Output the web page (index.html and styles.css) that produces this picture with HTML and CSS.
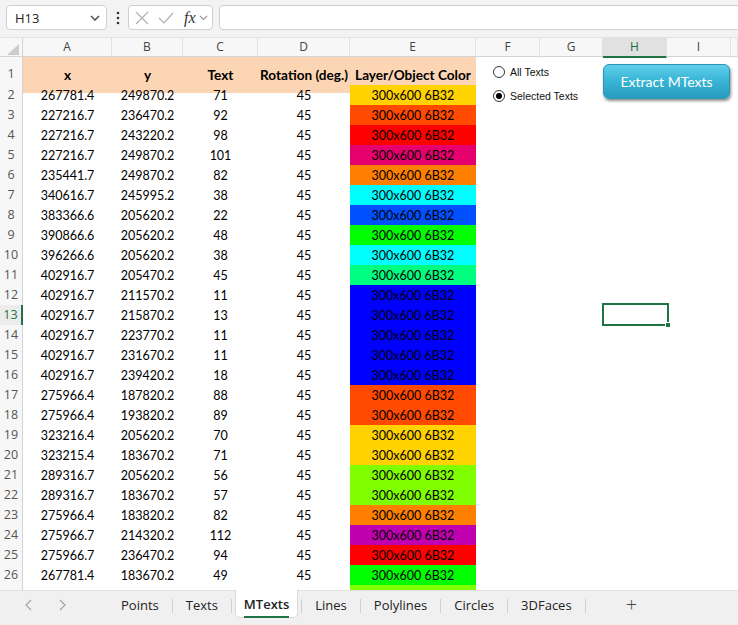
FILE: index.html
```html
<!DOCTYPE html>
<html>
<head>
<meta charset="utf-8">
<link rel="stylesheet" href="styles.css">
</head>
<body>
<div class="app">
  <div class="toolbar">
    <div class="namebox"><span>H13</span>
      <svg class="chev" width="10" height="6" viewBox="0 0 10 6"><path d="M1 1 L5 5 L9 1" fill="none" stroke="#444" stroke-width="1.3"/></svg>
    </div>
    <svg class="dots" width="4" height="14" viewBox="0 0 4 14"><circle cx="2" cy="2" r="1.3" fill="#333"/><circle cx="2" cy="7" r="1.3" fill="#333"/><circle cx="2" cy="12" r="1.3" fill="#333"/></svg>
    <div class="fxbox">
      <svg width="14" height="14" viewBox="0 0 14 14"><path d="M1 1 L13 13 M13 1 L1 13" stroke="#b0b0b0" stroke-width="1.2"/></svg>
      <svg width="16" height="14" viewBox="0 0 16 14"><path d="M1 7 L6 12 L15 2" fill="none" stroke="#b0b0b0" stroke-width="1.2"/></svg>
      <span class="fx">fx</span>
      <svg width="9" height="6" viewBox="0 0 9 6"><path d="M1 1 L4.5 4.5 L8 1" fill="none" stroke="#999" stroke-width="1.1"/></svg>
    </div>
    <div class="formula"></div>
  </div>

  <div class="sheet">
    <div class="row hdr">
      <div class="corner"><span class="tri"></span></div>
      <div class="ch">A</div><div class="ch">B</div><div class="ch">C</div><div class="ch">D</div><div class="ch">E</div><div class="ch">F</div><div class="ch">G</div><div class="ch sel">H</div><div class="ch">I</div><div class="ch"></div>
    </div>
    <div class="row r1">
      <div class="rh">1</div>
      <div class="c hd">x</div><div class="c hd">y</div><div class="c hd">Text</div><div class="c hd">Rotation (deg.)</div><div class="c hd">Layer/Object Color</div><div class="c"></div><div class="c"></div><div class="c"></div><div class="c"></div><div class="c"></div>
    </div>
    <div class="row"><div class="rh">2</div><div class="c">267781.4</div><div class="c">249870.2</div><div class="c">71</div><div class="c">45</div><div class="c gold">300x600 6B32</div></div>
    <div class="row"><div class="rh">3</div><div class="c">227216.7</div><div class="c">236470.2</div><div class="c">92</div><div class="c">45</div><div class="c vermil">300x600 6B32</div></div>
    <div class="row"><div class="rh">4</div><div class="c">227216.7</div><div class="c">243220.2</div><div class="c">98</div><div class="c">45</div><div class="c red">300x600 6B32</div></div>
    <div class="row"><div class="rh">5</div><div class="c">227216.7</div><div class="c">249870.2</div><div class="c">101</div><div class="c">45</div><div class="c pink">300x600 6B32</div></div>
    <div class="row"><div class="rh">6</div><div class="c">235441.7</div><div class="c">249870.2</div><div class="c">82</div><div class="c">45</div><div class="c orange">300x600 6B32</div></div>
    <div class="row"><div class="rh">7</div><div class="c">340616.7</div><div class="c">245995.2</div><div class="c">38</div><div class="c">45</div><div class="c cyan">300x600 6B32</div></div>
    <div class="row"><div class="rh">8</div><div class="c">383366.6</div><div class="c">205620.2</div><div class="c">22</div><div class="c">45</div><div class="c azure">300x600 6B32</div></div>
    <div class="row"><div class="rh">9</div><div class="c">390866.6</div><div class="c">205620.2</div><div class="c">48</div><div class="c">45</div><div class="c green">300x600 6B32</div></div>
    <div class="row"><div class="rh">10</div><div class="c">396266.6</div><div class="c">205620.2</div><div class="c">38</div><div class="c">45</div><div class="c cyan">300x600 6B32</div></div>
    <div class="row"><div class="rh">11</div><div class="c">402916.7</div><div class="c">205470.2</div><div class="c">45</div><div class="c">45</div><div class="c spring">300x600 6B32</div></div>
    <div class="row"><div class="rh">12</div><div class="c">402916.7</div><div class="c">211570.2</div><div class="c">11</div><div class="c">45</div><div class="c blue">300x600 6B32</div></div>
    <div class="row"><div class="rh rsel">13</div><div class="c">402916.7</div><div class="c">215870.2</div><div class="c">13</div><div class="c">45</div><div class="c blue">300x600 6B32</div></div>
    <div class="row"><div class="rh">14</div><div class="c">402916.7</div><div class="c">223770.2</div><div class="c">11</div><div class="c">45</div><div class="c blue">300x600 6B32</div></div>
    <div class="row"><div class="rh">15</div><div class="c">402916.7</div><div class="c">231670.2</div><div class="c">11</div><div class="c">45</div><div class="c blue">300x600 6B32</div></div>
    <div class="row"><div class="rh">16</div><div class="c">402916.7</div><div class="c">239420.2</div><div class="c">18</div><div class="c">45</div><div class="c blue">300x600 6B32</div></div>
    <div class="row"><div class="rh">17</div><div class="c">275966.4</div><div class="c">187820.2</div><div class="c">88</div><div class="c">45</div><div class="c vermil">300x600 6B32</div></div>
    <div class="row"><div class="rh">18</div><div class="c">275966.4</div><div class="c">193820.2</div><div class="c">89</div><div class="c">45</div><div class="c vermil">300x600 6B32</div></div>
    <div class="row"><div class="rh">19</div><div class="c">323216.4</div><div class="c">205620.2</div><div class="c">70</div><div class="c">45</div><div class="c gold">300x600 6B32</div></div>
    <div class="row"><div class="rh">20</div><div class="c">323215.4</div><div class="c">183670.2</div><div class="c">71</div><div class="c">45</div><div class="c gold">300x600 6B32</div></div>
    <div class="row"><div class="rh">21</div><div class="c">289316.7</div><div class="c">205620.2</div><div class="c">56</div><div class="c">45</div><div class="c lime">300x600 6B32</div></div>
    <div class="row"><div class="rh">22</div><div class="c">289316.7</div><div class="c">183670.2</div><div class="c">57</div><div class="c">45</div><div class="c lime">300x600 6B32</div></div>
    <div class="row"><div class="rh">23</div><div class="c">275966.4</div><div class="c">183820.2</div><div class="c">82</div><div class="c">45</div><div class="c orange">300x600 6B32</div></div>
    <div class="row"><div class="rh">24</div><div class="c">275966.7</div><div class="c">214320.2</div><div class="c">112</div><div class="c">45</div><div class="c purple">300x600 6B32</div></div>
    <div class="row"><div class="rh">25</div><div class="c">275966.7</div><div class="c">236470.2</div><div class="c">94</div><div class="c">45</div><div class="c red">300x600 6B32</div></div>
    <div class="row"><div class="rh">26</div><div class="c">267781.4</div><div class="c">183670.2</div><div class="c">49</div><div class="c">45</div><div class="c green">300x600 6B32</div></div>
    <div class="row"><div class="rh"></div><div class="c"></div><div class="c"></div><div class="c"></div><div class="c"></div><div class="c lime"></div></div>

    <div class="radio r-all"><span class="dot"></span><span>All Texts</span></div>
    <div class="radio r-sel"><span class="dot on"></span><span>Selected Texts</span></div>
    <div class="btn">Extract MTexts</div>
    <div class="cursor"><span class="handle"></span></div>
  </div>

  <div class="tabbar">
    <div class="nav">
      <svg width="7" height="12" viewBox="0 0 7 12"><path d="M6 1 L1 6 L6 11" fill="none" stroke="#a0a0a0" stroke-width="1.1"/></svg>
      <svg width="7" height="12" viewBox="0 0 7 12"><path d="M1 1 L6 6 L1 11" fill="none" stroke="#a0a0a0" stroke-width="1.1"/></svg>
    </div>
    <div class="tab">Points</div><span class="sep"></span>
    <div class="tab">Texts</div><span class="sep"></span>
    <div class="tab active"><span>MTexts</span></div><span class="sep"></span>
    <div class="tab">Lines</div><span class="sep"></span>
    <div class="tab">Polylines</div><span class="sep"></span>
    <div class="tab">Circles</div><span class="sep"></span>
    <div class="tab">3DFaces</div><span class="sep"></span>
    <div class="plus">+</div>
  </div>
</div>
</body>
</html>
```
FILE: styles.css
```css
* { box-sizing: border-box; }
html, body { margin: 0; padding: 0; }
body { width: 738px; height: 625px; overflow: hidden; background: #fff; font-family: "Open Sans", "Noto Sans", sans-serif; }
.app { display: flex; flex-direction: column; height: 625px; }

.toolbar { height: 38px; flex: none; background: #f3f3f3; display: flex; align-items: flex-start; padding: 5px 0 0 6px; border-bottom: 1px solid #e2e2e2; overflow: hidden; }
.toolbar > * { flex: none; }
.namebox { width: 101px; height: 25px; background: #fff; border: 1px solid #cfcfcf; border-radius: 4px; display: flex; align-items: center; justify-content: space-between; padding: 0 6px 0 8px; font-size: 13px; color: #222; }
.dots { margin: 6px 8px 0 9px; }
.fxbox { width: 85px; height: 25px; background: #fff; border: 1px solid #cfcfcf; border-radius: 4px; display: flex; align-items: center; padding: 0 4px 0 6px; gap: 8px; }
.fxbox svg:nth-child(2) { margin-left: 1px; }
.fx { font-family: "Liberation Serif", serif; font-style: italic; font-size: 16px; color: #333; margin-left: 2px; margin-right: -5px; line-height: 1; }
.formula { width: 540px; height: 25px; margin-left: 6px; background: #fff; border: 1px solid #cfcfcf; border-radius: 4px; }

.sheet { flex: 1; position: relative; overflow: hidden; font-family: Lato, "Open Sans", sans-serif; font-size: 12.5px; color: #000; }
.row { display: grid; grid-template-columns: 23px 89px 71px 75px 92px 126px 64px 63px 64px 64px 1fr; height: 20px; }
.row.hdr { height: 19px; background: #f7f7f7; border-bottom: 1px solid #d4d4d4; }
.row.r1 { height: 28px; }
.corner { position: relative; border-right: 1px solid #d4d4d4; }
.tri { position: absolute; right: 3px; bottom: 3px; width: 0; height: 0; border-left: 12px solid transparent; border-bottom: 11px solid #cccccc; }
.ch { font-family: "Open Sans", sans-serif; font-size: 12px; color: #444; text-align: center; line-height: 18px; border-right: 1px solid #e2e2e2; }
.ch.sel { background: #e1e1e1; color: #1e6b40; border-bottom: 2px solid #217346; }
.rh { font-family: "Open Sans", sans-serif; font-size: 12.5px; color: #555; text-align: center; line-height: 19px; background: #f7f7f7; border-right: 1px solid #d4d4d4; border-bottom: 1px solid #e2e2e2; }
.r1 .rh { line-height: 34px; }
.rh.rsel { color: #217346; border-right: 2px solid #217346; background: #ececec; }
.c { text-align: center; line-height: 21px; white-space: nowrap; overflow: visible; }
.r1 .c { background: #fcd5b4; }
.r1 .c:nth-child(n+7) { background: transparent; }
.c.hd { font-weight: bold; line-height: 36px; font-size: 13.6px; }

.gold { background: #ffd200; }
.vermil { background: #ff4a00; }
.red { background: #ff0000; }
.pink { background: #e6006e; }
.orange { background: #ff7f00; }
.cyan { background: #00ffff; }
.azure { background: #0050ff; }
.green { background: #00ff00; }
.spring { background: #00ff80; }
.blue { background: #0000ff; }
.lime { background: #80ff00; }
.purple { background: #c000b0; }

.radio { position: absolute; left: 493px; display: flex; align-items: center; gap: 5px; font-family: "Liberation Sans", Arial, sans-serif; font-size: 10.5px; color: #111; }
.r-all { top: 28px; }
.r-sel { top: 52px; }
.dot { width: 12px; height: 12px; border: 1px solid #333; border-radius: 50%; background: #fff; display: flex; align-items: center; justify-content: center; }
.dot.on::after { content: ""; width: 6px; height: 6px; border-radius: 50%; background: #000; }

.btn { position: absolute; left: 603px; top: 26px; width: 127px; height: 35px; border-radius: 6px; border: 1px solid #2a95b6; background: linear-gradient(#5fcfea 0%, #3ab6d7 45%, #279cc0 100%); box-shadow: 1px 2px 3px rgba(0,0,0,0.45); color: #fff; font-family: Lato, sans-serif; font-size: 14px; display: flex; align-items: center; justify-content: center; }

.cursor { position: absolute; left: 602px; top: 265px; width: 67px; height: 23px; border: 2px solid #217346; }
.handle { position: absolute; right: -4px; bottom: -4px; width: 6px; height: 6px; background: #217346; border: 1px solid #fff; }

.tabbar { height: 35px; flex: none; background: #f0f0f0; border-top: 1px solid #e0e0e0; display: flex; align-items: flex-start; font-family: "Open Sans", sans-serif; font-size: 13px; color: #222; }
.nav { width: 108px; height: 28px; display: flex; align-items: center; gap: 27px; padding-left: 25px; }
.tab { height: 28px; line-height: 29px; padding: 0 13px; }
.sep { width: 1px; height: 14px; margin-top: 8px; background: #d0d0d0; }
.tab.active { margin: -1px 3px 0; height: 28px; padding: 0 8px; background: #fff; border: 1px solid #d8d8d8; border-top: none; border-radius: 0 0 5px 5px; font-weight: 600; }
.tab.active span { display: inline-block; line-height: 23px; border-bottom: 2px solid #217346; }
.plus { margin-left: 40px; font-size: 20px; line-height: 27px; color: #444; font-weight: 300; }
```
